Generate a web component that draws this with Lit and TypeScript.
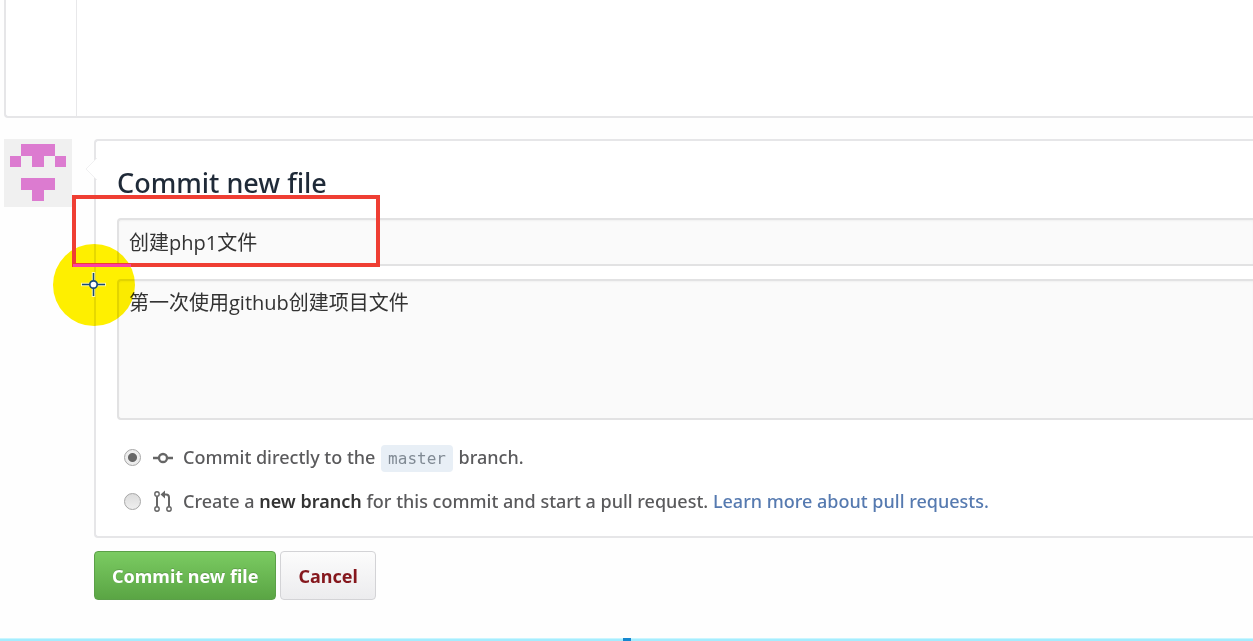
import { LitElement, html, css, svg } from "lit";
import { customElement, state } from "lit/decorators.js";

/** Filled cells of the 5x5 identicon, as [column, row]. */
const IDENTICON_CELLS: [number, number][] = [
  [1, 0], [2, 0], [3, 0],
  [0, 1], [2, 1], [4, 1],
  [1, 3], [2, 3], [3, 3],
  [2, 4],
];

@customElement("user-identicon")
class UserIdenticon extends LitElement {
  static styles = css`
    :host { display: block; }
    svg { display: block; width: 68px; height: 68px; }
  `;

  render() {
    return html`
      <svg viewBox="0 0 420 420" role="img" aria-label="Avatar" shape-rendering="crispEdges">
        <rect width="420" height="420" fill="#f0f0f0"></rect>
        ${IDENTICON_CELLS.map(
          ([x, y]) => svg`<rect x=${35 + x * 70} y=${32 + y * 70} width="70" height="70" fill="#dc7bd0"></rect>`
        )}
      </svg>
    `;
  }
}

@customElement("commit-form")
class CommitForm extends LitElement {
  @state() private target = "direct";

  static styles = css`
    :host { display: block; }
    * { box-sizing: border-box; }
    .panel {
      position: relative;
      display: flex;
      flex-direction: column;
      padding: 26px 0 19px 21px;
      border: 2px solid #e6e6e8;
      border-right: 0;
      border-radius: 4px 0 0 4px;
      background: #fff;
    }
    .caret {
      position: absolute;
      left: -11px;
      top: 16px;
      width: 13px;
      height: 24px;
    }
    h3 {
      margin: 0 0 19px;
      font: 500 27px/32px "Noto Sans", "Open Sans", sans-serif;
      color: #1f2a38;
    }
    .field {
      display: block;
      width: 100%;
      margin: 0;
      padding: 8px 10px;
      border: 2px solid #e2e2e3;
      border-right: 0;
      border-radius: 4px 0 0 4px;
      background: #fafafa;
      box-shadow: inset 0 1px 2px rgba(0, 0, 0, 0.04);
      font: 20px/28px "Open Sans", "Noto Sans CJK SC", sans-serif;
      color: #333;
      outline: none;
      resize: none;
    }
    input.field { height: 48px; padding: 6px 10px 8px; margin-bottom: 13px; }
    textarea.field { height: 141px; margin-bottom: 21px; overflow: hidden; }
    .option {
      display: flex;
      align-items: center;
      height: 32px;
      padding-left: 7px;
      font: 500 18px/32px "Noto Sans", "Open Sans", sans-serif;
      color: #5a5a5c;
      white-space: nowrap;
    }
    .option + .option { margin-top: 12px; }
    .radio {
      appearance: none;
      flex: none;
      width: 17px;
      height: 17px;
      margin: 0 12px 0 0;
      border: 1px solid #a6a6a6;
      border-radius: 50%;
      background: linear-gradient(#dcdcdc, #efefef);
    }
    .radio:checked {
      background: radial-gradient(circle, #666 0 4px, #ececec 5px);
    }
    .icon { flex: none; width: 20px; height: 22px; margin-right: 10px; color: #666; }
    strong { font-weight: 600; color: #333; }
    code {
      margin: 0 1px;
      padding: 4px 7px;
      border-radius: 4px;
      background: #e8eff6;
      font: 16px/18px "DejaVu Sans Mono", "Liberation Mono", monospace;
      color: #808a94;
    }
    a { color: #567ab0; text-decoration: none; }
    .actions { display: flex; gap: 4px; margin-top: 13px; }
    .button {
      height: 49px;
      padding: 0 17px;
      border: 1px solid #d3d3d6;
      border-radius: 4px;
      background: linear-gradient(#fcfcfc, #ececee);
      font: 700 18px/28px "Noto Sans", "Open Sans", sans-serif;
      color: #85171d;
      cursor: pointer;
    }
    .primary {
      border-color: #5ba048;
      background: linear-gradient(#7bcb62, #5aa544);
      color: #fff;
      text-shadow: 0 -1px 0 rgba(0, 0, 0, 0.15);
    }
  `;

  private pick(e: Event) {
    this.target = (e.target as HTMLInputElement).value;
  }

  render() {
    return html`
      <form @submit=${(e: Event) => e.preventDefault()}>
        <div class="panel">
          <svg class="caret" viewBox="0 0 13 24" aria-hidden="true">
            <path d="M13 0 1 12l12 12z" fill="#fff"></path>
            <path d="M12 1 1 12l11 11" fill="none" stroke="#f0f0f1"></path>
          </svg>
          <h3>Commit new file</h3>
          <input class="field" type="text" aria-label="Commit summary" .value=${"创建php1文件"} />
          <textarea class="field" aria-label="Extended description" .value=${"第一次使用github创建项目文件"}></textarea>
          <div class="option">
            <input class="radio" id="direct" type="radio" name="target" value="direct"
              .checked=${this.target === "direct"} @change=${this.pick} />
            <svg class="icon" viewBox="0 0 20 22" fill="none" stroke="currentColor" aria-hidden="true">
              <circle cx="10" cy="12" r="4" stroke-width="2.3"></circle>
              <path d="M0 12h6M14 12h6" stroke-width="2.6"></path>
            </svg>
            <label for="direct">Commit directly to the <code>master</code> branch.</label>
          </div>
          <div class="option">
            <input class="radio" id="branch" type="radio" name="target" value="branch"
              .checked=${this.target === "branch"} @change=${this.pick} />
            <svg class="icon" viewBox="0 0 20 22" fill="none" stroke="currentColor" aria-hidden="true">
              <g stroke-width="1.4">
                <circle cx="4" cy="4" r="2.2"></circle>
                <circle cx="4" cy="19" r="2.2"></circle>
                <circle cx="16" cy="19" r="2.2"></circle>
              </g>
              <path d="M4 6.5v10M16 16.500V7.500q0-3-3-3h-2" stroke-width="2"></path>
              <path d="M12 .5v8L7.500 4.500z" fill="currentColor" stroke="none"></path>
            </svg>
            <label for="branch">Create a <strong>new branch</strong> for this commit and start a pull request.
              <a href="#pull-requests">Learn more about pull requests.</a></label>
          </div>
        </div>
        <div class="actions">
          <button class="button primary" type="submit">Commit new file</button>
          <button class="button" type="button">Cancel</button>
        </div>
      </form>
    `;
  }
}

@customElement("app-root")
class AppRoot extends LitElement {
  static styles = css`
    :host {
      position: relative;
      display: flex;
      flex-direction: column;
      min-height: 100vh;
      overflow: hidden;
      background: #fefefe;
      font-family: "Noto Sans", "Open Sans", "Noto Sans CJK SC", sans-serif;
    }
    * { box-sizing: border-box; }
    .editor {
      display: flex;
      height: 118px;
      margin-left: 4px;
      border: 2px solid #e6e6e8;
      border-width: 0 0 2px 2px;
      border-radius: 0 0 0 4px;
      background: #fff;
    }
    .gutter { width: 71px; border-right: 1px solid #e8e8ea; }
    .compose {
      display: grid;
      grid-template-columns: 68px 1fr;
      column-gap: 22px;
      padding: 21px 0 0 4px;
    }
    .timeline {
      display: flex;
      justify-content: center;
      height: 3px;
      margin-top: auto;
      background: linear-gradient(#c9f6ff 1px, #a5edff 1px);
    }
    .playhead { width: 8px; background: #1687cf; }
    .marker {
      position: absolute;
      left: 72px;
      top: 195px;
      width: 308px;
      height: 72px;
      border: 4px solid #ef3e33;
      pointer-events: none;
    }
    .marker::after {
      content: "";
      position: absolute;
      left: -3px;
      bottom: -4px;
      width: 58px;
      height: 3px;
      background: #fb3fa5;
    }
    .spotlight {
      position: absolute;
      left: 53px;
      top: 244px;
      width: 82px;
      height: 82px;
      border-radius: 50%;
      background: #fff000;
      mix-blend-mode: multiply;
      pointer-events: none;
    }
    .crosshair {
      position: absolute;
      left: 80px;
      top: 271px;
      width: 27px;
      height: 27px;
      pointer-events: none;
    }
  `;

  render() {
    return html`
      <div class="editor"><div class="gutter"></div></div>
      <main class="compose">
        <user-identicon></user-identicon>
        <commit-form></commit-form>
      </main>
      <div class="timeline"><div class="playhead"></div></div>
      <div class="spotlight"></div>
      <div class="marker"></div>
      <svg class="crosshair" viewBox="0 0 27 27" fill="none" aria-hidden="true">
        <path d="M13.500 1v25M1 13.500h25" stroke="#fff" stroke-width="3.500" opacity=".65"></path>
        <path d="M13.500 2v23M2 13.500h23" stroke="#174b78" stroke-width="1.500"></path>
        <circle cx="13.500" cy="13.500" r="3.700" fill="#fff" stroke="#174b78" stroke-width="1.700"></circle>
      </svg>
    `;
  }
}
